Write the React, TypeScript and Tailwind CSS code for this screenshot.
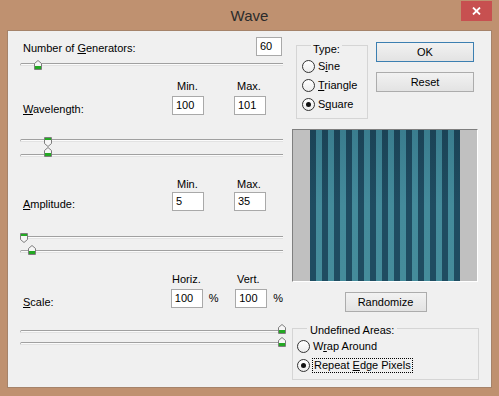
import React from 'react'

const STRIPES = Array.from({ length: 25 }, (_, i) => i)

type Dir = 'up' | 'down'

function Thumb({ left, top, dir }: { left: number; top: number; dir: Dir }) {
  return (
    <svg className="absolute" style={{ left, top }} width="8" height="10" viewBox="0 0 8 10">
      {dir === 'up' ? (
        <>
          <path d="M0.5 3.5 L4 0.5 L7.5 3.5 V9.5 H0.5 Z" fill="#f6f6f6" stroke="#7d7d7d" />
          <rect x="1" y="6" width="6" height="3" fill="#23a823" />
        </>
      ) : (
        <>
          <path d="M0.5 0.5 H7.5 V6.5 L4 9.5 L0.5 6.5 Z" fill="#f6f6f6" stroke="#7d7d7d" />
          <rect x="1" y="1" width="6" height="2" fill="#23a823" />
        </>
      )}
    </svg>
  )
}

function Slider({ thumb, top, dir, className }: { thumb: number; top: number; dir: Dir; className?: string }) {
  return (
    <div className={`relative h-[12px] pt-[5px] ${className ?? ''}`}>
      <div className="h-[3px] rounded-l-[2px] border-y border-l border-t-[#a0a0a0] border-b-[#e2e2e2] border-l-[#b4b4b4] bg-[#fbfbfb]" />
      <Thumb left={thumb} top={top} dir={dir} />
    </div>
  )
}

function Field({ value, className }: { value: string; className?: string }) {
  return (
    <div className={`h-[19px] border border-[#a9a9a9] bg-white pl-[3px] leading-[17px] ${className ?? ''}`}>
      {value}
    </div>
  )
}

function Radio({ checked }: { checked?: boolean }) {
  return (
    <span className="flex h-[13px] w-[13px] shrink-0 items-center justify-center rounded-full border border-[#333333] bg-linear-to-b from-[#ffffff] to-[#ececec]">
      {checked ? <span className="h-[5px] w-[5px] rounded-full bg-[#111111]" /> : null}
    </span>
  )
}

function Btn({ children, className }: { children: React.ReactNode; className?: string }) {
  return (
    <div className={`flex h-[20px] items-center justify-center border bg-linear-to-b from-[#f2f2f2] to-[#e3e3e3] ${className ?? ''}`}>
      {children}
    </div>
  )
}

export default function App() {
  return (
    <div className="h-[396px] w-[499px] bg-[#bf9170] font-['Liberation_Sans',Arial,sans-serif] text-[11px] leading-[13px] text-black">
      {/* title bar */}
      <div className="flex h-[30px]">
        <div className="w-[38px]" />
        <div className="flex flex-1 items-center justify-center text-[15px] text-[#2b2b2b]">Wave</div>
        <div className="mr-[7px] mt-[1px] flex h-[20px] w-[31px] items-center justify-center bg-[#c75050]">
          <svg width="9" height="8" viewBox="0 0 9 8">
            <path d="M1 0.5 L8 7.5 M8 0.5 L1 7.5" stroke="#ffffff" strokeWidth="1.8" />
          </svg>
        </div>
      </div>

      {/* client */}
      <div className="ml-[7px] flex h-[358px] w-[485px] border border-[#a5836a] bg-[#f0f0f0]">
        <div className="ml-[12px] w-[263px]">
          <div className="mt-[6px] flex items-start">
            <span className="mt-[5px] pl-[3px]">Number of <u>G</u>enerators:</span>
            <Field value="60" className="ml-auto mr-[1px] w-[26px]" />
          </div>
          <Slider className="mt-[2px]" thumb={14} top={2} dir="up" />

          <div className="mt-[10px] flex">
            <span className="ml-[157px] w-[60px]">Min.</span>
            <span>Max.</span>
          </div>
          <div className="mt-[3px] flex items-start">
            <span className="mt-[7px] w-[152px] pl-[3px]"><u>W</u>avelength:</span>
            <Field value="100" className="w-[32px]" />
            <Field value="101" className="ml-[30px] w-[32px]" />
          </div>
          <Slider className="mt-[18px]" thumb={24} top={3} dir="down" />
          <Slider className="mt-[3px]" thumb={24} top={-2} dir="up" />

          <div className="mt-[17px] flex">
            <span className="ml-[157px] w-[60px]">Min.</span>
            <span>Max.</span>
          </div>
          <div className="mt-[1px] flex items-start">
            <span className="mt-[6px] w-[152px] pl-[3px]"><u>A</u>mplitude:</span>
            <Field value="5" className="w-[32px]" />
            <Field value="35" className="ml-[30px] w-[32px]" />
          </div>
          <Slider className="mt-[20px]" thumb={0} top={2} dir="down" />
          <Slider className="mt-[2px]" thumb={8} top={0} dir="up" />

          <div className="mt-[16px] flex">
            <span className="ml-[152px] w-[65px]">Horiz.</span>
            <span>Vert.</span>
          </div>
          <div className="mt-[3px] flex items-start">
            <span className="mt-[7px] w-[152px] pl-[3px]"><u>S</u>cale:</span>
            <div className="flex w-[65px] items-start">
              <Field value="100" className="w-[32px]" />
              <span className="ml-[6px] mt-[3px]">%</span>
            </div>
            <div className="flex items-start">
              <Field value="100" className="w-[32px]" />
              <span className="ml-[6px] mt-[3px]">%</span>
            </div>
          </div>
          <Slider className="mt-[16px]" thumb={258} top={-1} dir="up" />
          <Slider thumb={258} top={0} dir="up" />
        </div>

        <div className="ml-[9px] w-[187px]">
          <div className="mt-[11px] flex items-start">
            <div className="relative ml-[4px] mt-[3px] h-[74px] w-[72px] border border-[#d5d5d5] pl-[5px] pt-[14px]">
              <span className="absolute -top-[3px] left-[14px] bg-[#f0f0f0] px-[2px]">Type:</span>
              <div className="flex flex-col gap-[6px]">
                <div className="flex h-[13px] items-center">
                  <Radio />
                  <span className="ml-[3px]">S<u>i</u>ne</span>
                </div>
                <div className="flex h-[13px] items-center">
                  <Radio />
                  <span className="ml-[3px]"><u>T</u>riangle</span>
                </div>
                <div className="flex h-[13px] items-center">
                  <Radio checked />
                  <span className="ml-[3px]">S<u>q</u>uare</span>
                </div>
              </div>
            </div>
            <div className="ml-[8px] flex flex-col">
              <Btn className="w-[98px] border-[#3c7fb1]">OK</Btn>
              <Btn className="mt-[10px] w-[98px] border-[#acacac]">Reset</Btn>
            </div>
          </div>

          <div className="mt-[10px] flex h-[153px] w-[186px] justify-center border border-b-white border-l-[#7f7f7f] border-r-white border-t-[#7f7f7f] bg-[#c0c0c0]">
            {STRIPES.map((i) => (
              <div
                key={i}
                className={i % 2 === 0
                  ? 'w-[6px] bg-linear-to-b from-[#1b4356] via-[#1f4c61] to-[#1f4c61]'
                  : 'w-[6px] bg-linear-to-b from-[#3a7d8e] via-[#448b9b] to-[#458c9b]'}
              />
            ))}
          </div>

          <Btn className="mx-auto mt-[10px] w-[82px] border-[#acacac]">Randomize</Btn>

          <div className="relative mt-[16px] h-[52px] w-[187px] border border-[#d5d5d5] pl-[4px] pt-[11px]">
            <span className="absolute -top-[5px] left-[14px] bg-[#f0f0f0] px-[3px]">Undefined Areas:</span>
            <div className="flex flex-col gap-[6px]">
              <div className="flex h-[13px] items-center">
                <Radio />
                <span className="ml-[3px]">W<u>r</u>ap Around</span>
              </div>
              <div className="flex h-[13px] items-center">
                <Radio checked />
                <span className="ml-[2px] border border-dotted border-black px-[1px]">Repeat <u>E</u>dge Pixels</span>
              </div>
            </div>
          </div>
        </div>
      </div>
    </div>
  )
}
